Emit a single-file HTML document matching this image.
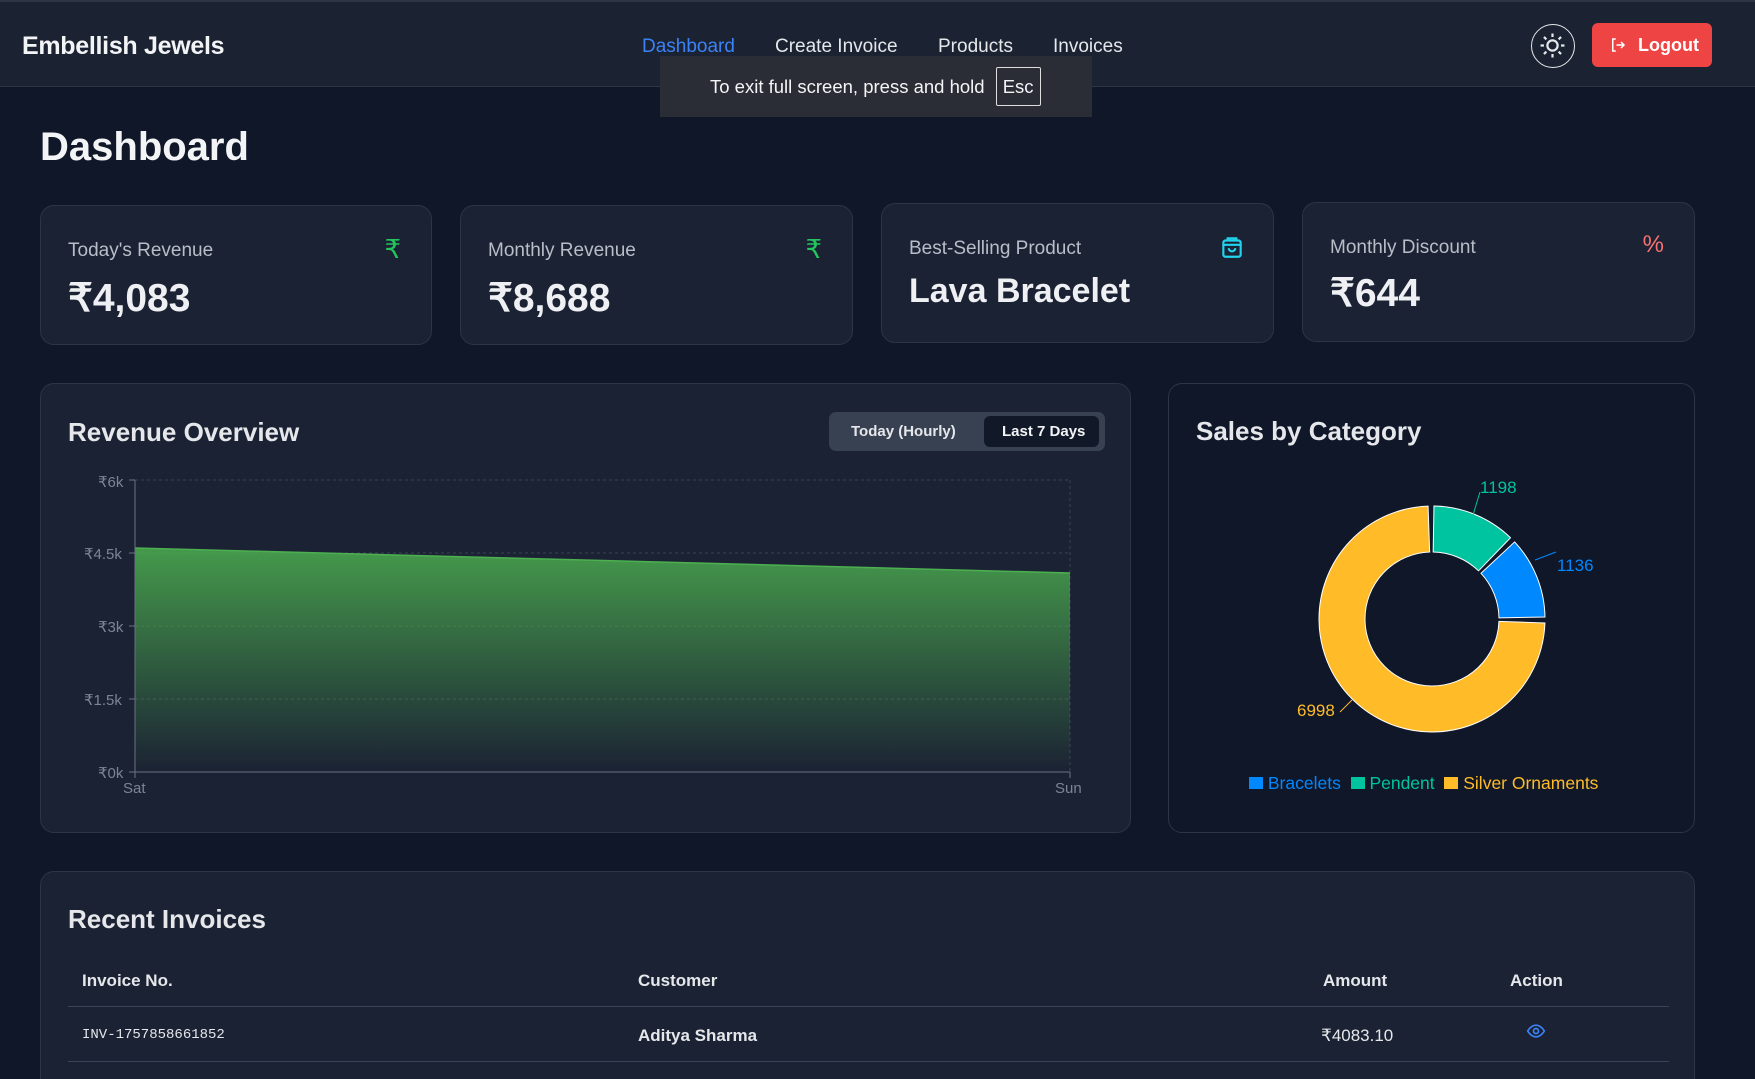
<!DOCTYPE html>
<html style="width:1755px;height:1079px;overflow:hidden"><head><meta charset="utf-8"><style>
*{box-sizing:border-box;margin:0;padding:0}
body{width:1755px;height:1079px;overflow:hidden;background:#0f1729;font-family:"Liberation Sans",sans-serif;color:#e5e7eb;position:relative}
.nav{position:absolute;left:0;top:0;width:1755px;height:87px;background:#1b2333;border-bottom:1px solid #2b3546;border-top:2px solid #2b3546}
.brand{position:absolute;left:22px;top:30px;font-size:25px;font-weight:bold;color:#f3f4f6;letter-spacing:-0.3px}
.links a{position:absolute;top:34px;font-size:19px;color:#e5e7eb;text-decoration:none}
.theme{position:absolute;left:1531px;top:22px;width:44px;height:44px;border-radius:50%;border:1.5px solid #e5e7eb}
.logout{position:absolute;left:1592px;top:21px;width:120px;height:44px;border-radius:6px;background:#ef4444;color:#fff;font-weight:bold;font-size:18px;padding:12px 0 0 46px}
.toast{position:absolute;left:660px;top:56px;width:432px;height:61px;background:#2a2d35;font-size:18.5px;color:#f3f4f6;padding:20px 0 0 50px}
.toast span{border:1.5px solid #ddd;padding:8px 6px;margin-left:6px;border-radius:2px}
h1{position:absolute;left:40px;top:125px;font-size:40px;font-weight:bold;color:#f3f4f6}
.card{position:absolute;background:#1b2233;border:1px solid #2b3546;border-radius:14px}
.lab{position:absolute;left:27px;top:34px;font-size:19px;color:#b8bec8}
.val{position:absolute;left:27px;top:70px;font-size:39px;font-weight:bold;color:#eef0f3}
.ico{position:absolute;right:30px;top:28px;font-size:26px}
.t2{position:absolute;left:27px;font-size:26px;font-weight:bold;color:#e5e7eb}
.ax{position:absolute;font-size:15px;color:#7d8594}
</style></head><body>
<div class="nav">
<div class="brand">Embellish Jewels</div>
<div class="links"><a style="left:642px;color:#3b82f6">Dashboard</a><a style="left:775px">Create Invoice</a><a style="left:938px">Products</a><a style="left:1053px">Invoices</a></div>
<div class="theme"><svg width="41" height="41" viewBox="0 0 24 24" fill="none" stroke="#e5e7eb" stroke-width="1.3" style="position:absolute;left:0;top:0"><circle cx="12" cy="12" r="3"/><path d="M12 5v2M12 17v2M5 12h2M17 12h2M7 7l1.4 1.4M15.6 15.6L17 17M7 17l1.4-1.4M15.6 8.4L17 7"/></svg></div>
<div class="logout"><svg width="18" height="18" viewBox="0 0 24 24" fill="none" stroke="#fff" stroke-width="2" style="position:absolute;left:17px;top:13px"><path d="M9 4H5v16h4M10 12h10M16 8l4 4-4 4"/></svg>Logout</div>
</div>
<div class="toast">To exit full screen, press and hold <span>Esc</span></div>
<h1>Dashboard</h1>

<div class="card" style="left:40px;top:205px;width:392px;height:140px"><div class="lab">Today's Revenue</div><div class="val">₹4,083</div><div class="ico" style="color:#22c55e">₹</div></div>
<div class="card" style="left:460px;top:205px;width:393px;height:140px"><div class="lab">Monthly Revenue</div><div class="val">₹8,688</div><div class="ico" style="color:#22c55e">₹</div></div>
<div class="card" style="left:881px;top:203px;width:393px;height:140px"><div class="lab">Best-Selling Product</div><div class="val" style="top:68px;font-size:34px">Lava Bracelet</div>
<svg style="position:absolute;right:28px;top:30px" width="26" height="26" viewBox="0 0 24 24" fill="none" stroke="#22d3ee" stroke-width="2"><rect x="4" y="6" width="16" height="15" rx="2"/><path d="M4 10h16M9 13a3 3 0 006 0M8 6V4h8v2"/></svg></div>
<div class="card" style="left:1302px;top:202px;width:393px;height:140px"><div class="lab">Monthly Discount</div><div class="val" style="top:68px">₹644</div><div class="ico" style="color:#f87171;font-size:24px">%</div></div>

<div class="card" style="left:40px;top:383px;width:1091px;height:450px">
<div class="t2" style="top:33px">Revenue Overview</div>
<div style="position:absolute;left:788px;top:28px;width:276px;height:39px;background:#374151;border-radius:7px">
<div style="position:absolute;left:22px;top:11px;font-size:15px;font-weight:bold;color:#e5e7eb">Today (Hourly)</div>
<div style="position:absolute;left:155px;top:4px;width:115px;height:31px;background:#111827;border-radius:6px;font-size:15px;font-weight:bold;color:#f3f4f6;padding:7px 0 0 18px">Last 7 Days</div></div>
</div>
<svg style="position:absolute;left:0;top:0" width="1755" height="1079">
<defs><linearGradient id="g" x1="0" y1="0" x2="0" y2="1"><stop offset="0" stop-color="#4caf50" stop-opacity=".85"/><stop offset="1" stop-color="#4caf50" stop-opacity="0"/></linearGradient></defs>
<g stroke="#3a4456" stroke-dasharray="3 3"><path d="M135 480H1070M135 553H1070M135 626H1070M135 699H1070M1070 480V772"/></g>
<path d="M135 548L1070 573V772H135Z" fill="url(#g)"/>
<path d="M135 548L1070 573" stroke="#4caf50" stroke-width="1.5" fill="none"/>
<path d="M135 480V772H1070" stroke="#6b7280" fill="none"/>
<path d="M129 480h6M129 553h6M129 626h6M129 699h6M129 772h6M135 772v6M1070 772v6" stroke="#6b7280"/>
<g stroke="#fff" stroke-width="1">
<path d="M1433.97 506.02A113 113 0 0 1 1510.5 537.72L1478.54 570.81A67 67 0 0 0 1433.17 552.01Z" fill="#00c49f"/>
<path d="M1514.65 541.93A113 113 0 0 1 1544.98 617.03L1498.99 617.83A67 67 0 0 0 1481 573.31Z" fill="#0088fe"/>
<path d="M1544.93 622.94A113 113 0 1 1 1428.06 506.07L1429.66 552.04A67 67 0 1 0 1498.96 621.34Z" fill="#ffbb28"/>
</g>
<path d="M1473 515L1480 492" stroke="#00c49f"/><path d="M1535 560L1556 552" stroke="#0088fe"/><path d="M1340 712L1352 700" stroke="#ffbb28"/>
<g font-family="Liberation Sans" font-size="17"><text x="1480" y="493" fill="#00c49f">1198</text><text x="1557" y="571" fill="#0088fe">1136</text><text x="1297" y="716" fill="#ffbb28">6998</text></g>
</svg>
<div class="ax" style="left:98px;top:473px">₹6k</div><div class="ax" style="left:84px;top:545px">₹4.5k</div><div class="ax" style="left:98px;top:618px">₹3k</div><div class="ax" style="left:84px;top:691px">₹1.5k</div><div class="ax" style="left:98px;top:764px">₹0k</div>
<div class="ax" style="left:123px;top:780px">Sat</div><div class="ax" style="left:1055px;top:780px">Sun</div>

<div class="card" style="left:1168px;top:383px;width:527px;height:450px;background:transparent">
<div class="t2" style="top:32px">Sales by Category</div>
<div style="position:absolute;left:80px;top:389px;font-size:17.5px;white-space:nowrap">
<span style="display:inline-block;width:14px;height:12px;background:#0088fe"></span> <span style="color:#0088fe">Bracelets</span>&nbsp;
<span style="display:inline-block;width:14px;height:12px;background:#00c49f"></span> <span style="color:#00c49f">Pendent</span>&nbsp;
<span style="display:inline-block;width:14px;height:12px;background:#ffbb28"></span> <span style="color:#ffbb28">Silver Ornaments</span></div>
</div>

<div class="card" style="left:40px;top:871px;width:1655px;height:230px">
<div class="t2" style="top:32px">Recent Invoices</div>
<div style="position:absolute;left:27px;top:134px;width:1601px;border-top:1px solid #3a4456"></div>
<div style="position:absolute;left:27px;top:189px;width:1601px;border-top:1px solid #3a4456"></div>
<div style="position:absolute;top:99px;left:41px;font-weight:bold;font-size:17px">Invoice No.</div>
<div style="position:absolute;top:99px;left:597px;font-weight:bold;font-size:17px">Customer</div>
<div style="position:absolute;top:99px;left:1282px;font-weight:bold;font-size:17px">Amount</div>
<div style="position:absolute;top:99px;left:1469px;font-weight:bold;font-size:17px">Action</div>
<div style="position:absolute;top:155px;left:41px;font-family:'Liberation Mono',monospace;font-size:14px">INV-1757858661852</div>
<div style="position:absolute;top:154px;left:597px;font-weight:bold;font-size:17px">Aditya Sharma</div>
<div style="position:absolute;top:154px;left:1280px;font-size:17px">₹4083.10</div>
<svg style="position:absolute;top:149px;left:1485px" width="20" height="20" viewBox="0 0 24 24" fill="none" stroke="#3b82f6" stroke-width="2"><path d="M2 12s4-7 10-7 10 7 10 7-4 7-10 7S2 12 2 12z"/><circle cx="12" cy="12" r="3"/></svg>
</div>
</body></html>
